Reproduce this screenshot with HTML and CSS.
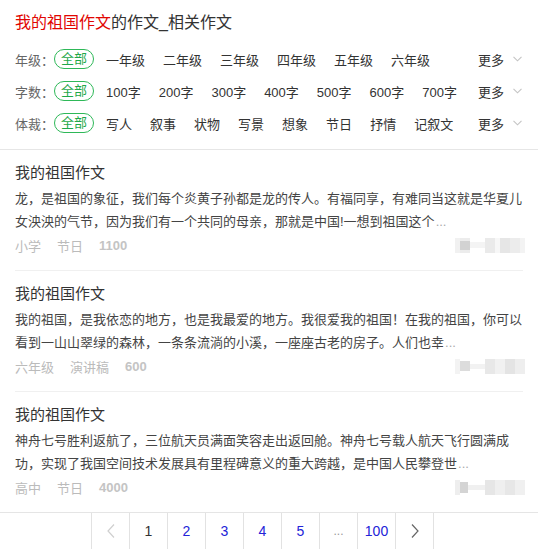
FILE: index.html
```html
<!DOCTYPE html>
<html lang="zh-CN">
<head>
<meta charset="utf-8">
<title>我的祖国作文的作文_相关作文</title>
<link rel="stylesheet" href="styles.css">
</head>
<body>
<div class="header">
  <h1 class="page-title"><span class="hl">我的祖国作文</span>的作文_相关作文</h1>
  <div class="filter">
    <span class="f-label">年级：</span>
    <span class="pill">全部</span>
    <span class="opt">一年级</span><span class="opt">二年级</span><span class="opt">三年级</span><span class="opt">四年级</span><span class="opt">五年级</span><span class="opt">六年级</span>
    <span class="more">更多<svg class="chev" width="9" height="6" viewBox="0 0 9 6"><polyline points="0.5,0.8 4.5,4.8 8.5,0.8" fill="none" stroke="#c4c4c4" stroke-width="1.1"/></svg></span>
  </div>
  <div class="filter">
    <span class="f-label">字数：</span>
    <span class="pill">全部</span>
    <span class="opt">100字</span><span class="opt">200字</span><span class="opt">300字</span><span class="opt">400字</span><span class="opt">500字</span><span class="opt">600字</span><span class="opt">700字</span>
    <span class="more">更多<svg class="chev" width="9" height="6" viewBox="0 0 9 6"><polyline points="0.5,0.8 4.5,4.8 8.5,0.8" fill="none" stroke="#c4c4c4" stroke-width="1.1"/></svg></span>
  </div>
  <div class="filter">
    <span class="f-label">体裁：</span>
    <span class="pill">全部</span>
    <span class="opt">写人</span><span class="opt">叙事</span><span class="opt">状物</span><span class="opt">写景</span><span class="opt">想象</span><span class="opt">节日</span><span class="opt">抒情</span><span class="opt">记叙文</span>
    <span class="more">更多<svg class="chev" width="9" height="6" viewBox="0 0 9 6"><polyline points="0.5,0.8 4.5,4.8 8.5,0.8" fill="none" stroke="#c4c4c4" stroke-width="1.1"/></svg></span>
  </div>
</div>

<div class="list">
  <div class="item">
    <div class="item-title">我的祖国作文</div>
    <div class="item-body">龙，是祖国的象征，我们每个炎黄子孙都是龙的传人。有福同享，有难同当这就是华夏儿女泱泱的气节，因为我们有一个共同的母亲，那就是中国!一想到祖国这个<span class="dots">...</span></div>
    <div class="meta">
      <span class="tag">小学</span><span class="tag">节日</span><span class="num">1100</span>
      <svg class="author" width="70" height="15" viewBox="0 0 70 15"><rect x="0" y="0" width="5" height="15" fill="#f1f1f1"/><rect x="5" y="3" width="10" height="9" fill="#d2d2d2"/><rect x="5" y="0" width="10" height="3" fill="#ececec"/><rect x="5" y="12" width="10" height="3" fill="#ececec"/><rect x="15" y="4" width="15" height="6" fill="#f4f4f4"/><rect x="30" y="0" width="10" height="15" fill="#eaeaea"/><rect x="40" y="0" width="5" height="15" fill="#f7f7f7"/><rect x="45" y="0" width="10" height="15" fill="#e6e6e6"/><rect x="55" y="0" width="10" height="15" fill="#ececec"/><rect x="65" y="0" width="5" height="15" fill="#f3f3f3"/></svg>
    </div>
  </div>
  <div class="item">
    <div class="item-title">我的祖国作文</div>
    <div class="item-body">我的祖国，是我依恋的地方，也是我最爱的地方。我很爱我的祖国！在我的祖国，你可以看到一山山翠绿的森林，一条条流淌的小溪，一座座古老的房子。人们也幸<span class="dots">...</span></div>
    <div class="meta">
      <span class="tag">六年级</span><span class="tag">演讲稿</span><span class="num">600</span>
      <svg class="author" width="70" height="15" viewBox="0 0 70 15"><rect x="0" y="0" width="5" height="15" fill="#f3f3f3"/><rect x="5" y="2" width="10" height="10" fill="#dcdcdc"/><rect x="15" y="5" width="15" height="5" fill="#f2f2f2"/><rect x="30" y="0" width="10" height="15" fill="#e8e8e8"/><rect x="40" y="0" width="10" height="15" fill="#f1f1f1"/><rect x="50" y="0" width="10" height="15" fill="#e4e4e4"/><rect x="60" y="0" width="10" height="15" fill="#eeeeee"/></svg>
    </div>
  </div>
  <div class="item last">
    <div class="item-title">我的祖国作文</div>
    <div class="item-body">神舟七号胜利返航了，三位航天员满面笑容走出返回舱。神舟七号载人航天飞行圆满成功，实现了我国空间技术发展具有里程碑意义的重大跨越，是中国人民攀登世<span class="dots">...</span></div>
    <div class="meta">
      <span class="tag">高中</span><span class="tag">节日</span><span class="num">4000</span>
      <svg class="author" width="70" height="15" viewBox="0 0 70 15"><rect x="0" y="0" width="5" height="15" fill="#eeeeee"/><rect x="5" y="2" width="8" height="11" fill="#d4d4d4"/><rect x="13" y="5" width="17" height="5" fill="#f0f0f0"/><rect x="30" y="0" width="10" height="15" fill="#e6e6e6"/><rect x="40" y="0" width="10" height="15" fill="#efefef"/><rect x="50" y="0" width="10" height="15" fill="#e7e7e7"/><rect x="60" y="0" width="10" height="15" fill="#f0f0f0"/></svg>
    </div>
  </div>
</div>

<div class="pager">
  <div class="pages">
    <span class="pg arrow"><svg width="8" height="14" viewBox="0 0 8 14"><polyline points="7,0.5 1,7 7,13.5" fill="none" stroke="#cfcfcf" stroke-width="1.2"/></svg></span>
    <span class="pg current">1</span>
    <span class="pg link">2</span>
    <span class="pg link">3</span>
    <span class="pg link">4</span>
    <span class="pg link">5</span>
    <span class="pg ell">...</span>
    <span class="pg link">100</span>
    <span class="pg arrow"><svg width="8" height="14" viewBox="0 0 8 14"><polyline points="1,0.5 7,7 1,13.5" fill="none" stroke="#666" stroke-width="1.2"/></svg></span>
  </div>
</div>
</body>
</html>
```

FILE: styles.css
```css
* { box-sizing: border-box; }
html, body { margin: 0; padding: 0; background: #fff; }
body {
  font-family: "Liberation Sans", "Noto Sans CJK SC", sans-serif;
  color: #333;
  width: 538px;
  overflow: hidden;
}
.header {
  padding: 11px 15px 10px;
  border-bottom: 1px solid #e6e6e6;
}
.page-title {
  margin: 0 0 8px;
  font-size: 16px;
  line-height: 24px;
  font-weight: normal;
  color: #333;
}
.hl { color: #e10602; }
.filter {
  display: flex;
  align-items: center;
  height: 32px;
  font-size: 13px;
}
.f-label { color: #666; }
.pill {
  height: 20px;
  line-height: 18px;
  padding: 0 6px;
  border: 1px solid #2eb858;
  border-radius: 10px;
  color: #1fa84a;
  margin-right: 12px;
}
.opt {
  margin-right: 18px;
  color: #333;
}
.more {
  margin-left: auto;
  display: flex;
  align-items: center;
  color: #333;
}
.chev { margin-left: 9px; margin-right: 1px; }
.list { padding: 0 15px; }
.item {
  padding: 12px 0 14px;
  border-bottom: 1px solid #f0f0f0;
}
.item.last { border-bottom: none; }
.item-title {
  font-size: 15px;
  line-height: 22px;
  color: #333;
}
.item-body {
  margin-top: 3px;
  font-size: 13px;
  line-height: 23px;
  color: #444;
}
.dots { color: #aaa; margin-left: 1px; }
.meta {
  margin-top: 1px;
  height: 22px;
  display: flex;
  align-items: center;
  font-size: 13px;
}
.tag { color: #bbb; margin-right: 16px; }
.num { color: #c4c4c4; font-weight: bold; }
.author { margin-left: auto; margin-right: -2px; }
.pager {
  border-top: 1px solid #e5e5e5;
  height: 37px;
}
.pages {
  display: flex;
  margin-left: 91px;
  height: 36px;
}
.pg {
  width: 38px;
  height: 36px;
  border-left: 1px solid #e2e2e2;
  display: flex;
  align-items: center;
  justify-content: center;
  font-size: 14px;
}
.pg:last-child { border-right: 1px solid #e2e2e2; width: 39px; }
.current { color: #333; }
.link { color: #2323d8; }
.ell { color: #999; font-size: 12px; }
```
